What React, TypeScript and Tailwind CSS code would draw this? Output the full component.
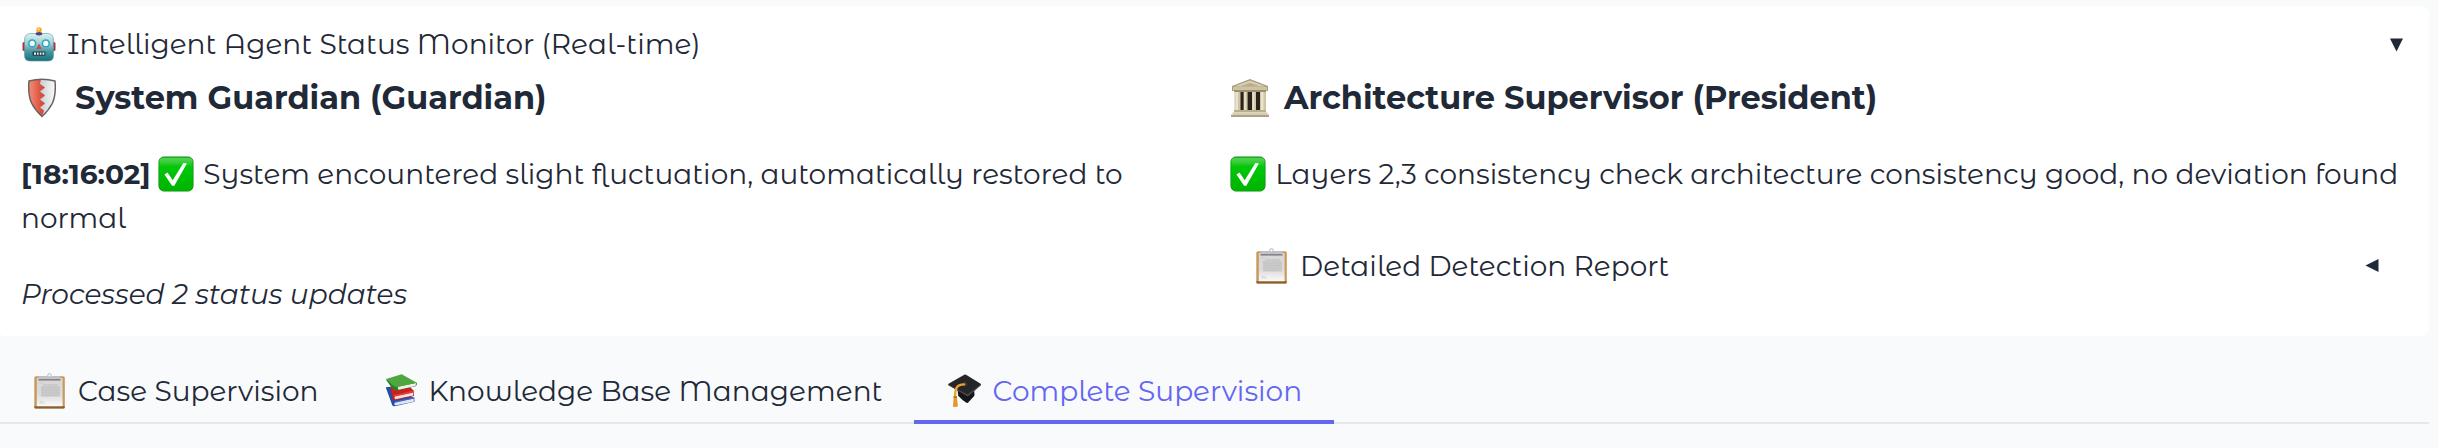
import { useState } from 'react'
import type { ReactNode } from 'react'
import clsx from 'clsx'

type IconProps = { className?: string }

function RobotIcon({ className }: IconProps) {
    return (
        <svg viewBox="0 0 36 36" className={className} aria-hidden="true">
            <defs>
                <linearGradient id="robot-face" x1="0" y1="0" x2="0" y2="1">
                    <stop offset="0" stopColor="#d9f4f1" />
                    <stop offset="0.35" stopColor="#a3d0d3" />
                    <stop offset="0.65" stopColor="#4a98a0" />
                    <stop offset="1" stopColor="#15707c" />
                </linearGradient>
            </defs>
            <rect x="1.5" y="16" width="4" height="9" rx="1.5" fill="#b3303c" />
            <rect x="30.5" y="16" width="4" height="9" rx="1.5" fill="#b3303c" />
            <circle cx="18" cy="4" r="2.7" fill="#f6a421" />
            <circle cx="17.5" cy="3.2" r="1.2" fill="#fdd66b" />
            <path d="M10 7.500h16q6.500 0 6.500 6.500v15.500q0 5.500-5.500 5.500H9q-5.500 0-5.500-5.500V14q0-6.500 6.500-6.500z" fill="url(#robot-face)" stroke="#5b98a0" strokeWidth="0.6" />
            <ellipse cx="18" cy="7.800" rx="3.400" ry="1.700" fill="#5a3f78" />
            <circle cx="11.2" cy="17.4" r="4.2" fill="#2fa5c6" />
            <circle cx="24.8" cy="17.4" r="4.2" fill="#2fa5c6" />
            <circle cx="11.2" cy="17.4" r="2.600" fill="#f5feff" />
            <circle cx="24.8" cy="17.4" r="2.600" fill="#f5feff" />
            <path d="M18 17.5l2.800 5.500h-5.600z" fill="#c94b4b" />
            <rect x="11.5" y="25.500" width="13" height="4.2" rx="1" fill="#1d4047" />
            <path d="M13 26.500h2v2.200h-2zM16 26.500h1.600v2.200H16zM18.800 26.500h1.600v2.200h-1.600zM21.500 26.500h1.800v2.200h-1.800z" fill="#e8eeee" />
        </svg>
    )
}

function ShieldIcon({ className }: IconProps) {
    return (
        <svg viewBox="0 0 40 40" className={className} aria-hidden="true">
            <defs>
                <linearGradient id="shield-red" x1="0" y1="0" x2="1" y2="0">
                    <stop offset="0" stopColor="#f0907c" />
                    <stop offset="0.5" stopColor="#e46552" />
                    <stop offset="1" stopColor="#c9402c" />
                </linearGradient>
                <linearGradient id="shield-silver" x1="0" y1="0" x2="1" y2="0">
                    <stop offset="0" stopColor="#b9bcc4" />
                    <stop offset="0.5" stopColor="#cfd2d9" />
                    <stop offset="1" stopColor="#fbfbfc" />
                </linearGradient>
            </defs>
            <path d="M8 3Q21-.5 34 3q1.200 13-2.500 22Q28 32 21 38.500 14 32 10.500 25 6.800 16 8 3z" fill="url(#shield-silver)" />
            <path d="M8 3q6.500-1.700 12-1.700L19 6l5 3.500-5 4 5 4-5 4 5 4-5 4 4 3-2 6Q14 32 10.500 25 6.800 16 8 3z" fill="url(#shield-red)" />
            <path d="M8 3Q21-.5 34 3q1.200 13-2.500 22Q28 32 21 38.500 14 32 10.500 25 6.800 16 8 3z" fill="none" stroke="#6b625f" strokeWidth="1.500" strokeLinejoin="round" />
        </svg>
    )
}

function TempleIcon({ className }: IconProps) {
    return (
        <svg viewBox="0 0 40 40" className={className} aria-hidden="true">
            <path d="M20 1L38 8v5H2V8z" fill="#a79c7f" />
            <path d="M20 2.500L36 8.600H4z" fill="#d9d1b2" />
            <path d="M20 4.800l9 3.200H11z" fill="#b8ae8e" />
            <rect x="3" y="9" width="34" height="3.500" fill="#cdc3a2" />
            <rect x="5" y="12" width="30" height="21" fill="#2b211d" />
            <path d="M4.500 12h6v21h-6zM13.600 12h4v21h-4zM22 12h4v21h-4zM30 12h6v21h-6z" fill="#cfc6a6" />
            <path d="M5.500 12H8v21H5.500zM14.200 12h1.600v21h-1.600zM22.600 12h1.600v21h-1.600zM31 12h2.500v21H31z" fill="#e9e3cc" />
            <path d="M4 12h32v2H4z" fill="#9b9070" />
            <rect x="4" y="32" width="32" height="2.400" fill="#b9af8d" />
            <rect x="2.500" y="34.400" width="35" height="2.300" fill="#d8cfb0" />
            <rect x="1" y="36.700" width="38" height="2.300" fill="#aea382" />
        </svg>
    )
}

function CheckIcon({ className }: IconProps) {
    return (
        <svg viewBox="0 0 36 36" className={className} aria-hidden="true">
            <defs>
                <linearGradient id="check-green" x1="0" y1="0" x2="0" y2="1">
                    <stop offset="0" stopColor="#17a717" />
                    <stop offset="0.05" stopColor="#4fd44f" />
                    <stop offset="0.18" stopColor="#2fcb2f" />
                    <stop offset="0.28" stopColor="#00c80a" />
                    <stop offset="1" stopColor="#00b300" />
                </linearGradient>
            </defs>
            <rect x="0.900" y="0.900" width="34.200" height="34.200" rx="5" fill="url(#check-green)" stroke="#159a1a" strokeWidth="0.900" />
            <path d="M6.500 18.600l3-2 5.200 7.600L25.400 7l3.500.4-12.600 22.400h-2.200z" fill="#fff" />
        </svg>
    )
}

function ClipboardIcon({ className }: IconProps) {
    return (
        <svg viewBox="0 0 36 36" className={className} aria-hidden="true">
            <defs>
                <linearGradient id="clip-paper" x1="0" y1="0" x2="0" y2="1">
                    <stop offset="0" stopColor="#d6d6d6" />
                    <stop offset="0.600" stopColor="#dcdcdc" />
                    <stop offset="1" stopColor="#fafafa" />
                </linearGradient>
            </defs>
            <rect x="2.300" y="3.200" width="30.500" height="32.300" rx="1.600" fill="#c8995a" />
            <path d="M2.300 33.200h30.500v.7q0 1.600-1.600 1.600H3.900q-1.600 0-1.600-1.600z" fill="#8a5e2e" />
            <rect x="4.800" y="5" width="25.800" height="28.200" fill="url(#clip-paper)" />
            <path d="M11 11h15v2h2v10.500H9V13h2z" fill="#cacaca" />
            <path d="M9.500 15h18M9.500 17.500h18M9.500 20h18M9.500 22.500h14" stroke="#bdbdbd" strokeWidth="0.500" />
            <path d="M7.500 10h3.500M7.500 28.500h3.500M7.500 30h5.500" stroke="#c6c6c6" strokeWidth="0.600" />
            <rect x="6.500" y="3.200" width="22" height="3" rx="0.800" fill="#bcc3cf" />
            <path d="M6.500 6.200h22v1.300h-22z" fill="#77706b" />
            <circle cx="17.500" cy="2.300" r="1.800" fill="#f2f5f9" stroke="#a9bad0" strokeWidth="0.900" />
        </svg>
    )
}

function BooksIcon({ className }: IconProps) {
    return (
        <svg viewBox="0 0 36 36" className={className} aria-hidden="true">
            <path d="M3.700 14.300l5-.6L32.300 25l.2 3.700-19.800 4.600q-2 .4-2.600-1.500z" fill="#2b4aa5" />
            <path d="M13.200 29l18.600-3.600v3.400L13 32.600q-1.600-1.600.2-3.600z" fill="#e3e6ef" />
            <path d="M12.200 28.400l19.900-4.200.3 1.400L13 29.800z" fill="#4167c6" />
            <path d="M8.500 13.500l18.500-.5 4.500 4.500.4 5.400-18.400 4.300q-2.300.3-2.900-1.400z" fill="#c9211e" />
            <path d="M13 23l18-3.600v3.100L13.300 26.300q-1.600-1.500-.3-3.300z" fill="#f1e3e1" />
            <path d="M11 22.300l20.500-4.800.3 2-18.500 3.900z" fill="#ea3b33" />
            <path d="M3.800 6.500l31 3.200.2 1.500-1.200 2.100-18.600 4.200q-3 .5-5-2.300z" fill="#2c7f28" />
            <path d="M16.300 13.500L34.200 10l-.7 3L16.600 16.800q-1.600-1.400-.3-3.300z" fill="#eef1e8" />
            <path d="M4 6.100L19.700 1.200l15.100 8.600-19 4.200q-3 .3-5-1.700z" fill="#4fa741" />
        </svg>
    )
}

function GraduationIcon({ className }: IconProps) {
    return (
        <svg viewBox="0 0 37 36" className={className} aria-hidden="true">
            <path d="M12 17l16.500-3 .8 7.500q.1 1.500-1.300 2.700l-5.200 5.600q-.8.700-1.800.2-4.500-2.500-8.500-7z" fill="#161618" />
            <path d="M18.800 1.400q.9-.6 1.800 0l15 9.100q.8.700.1 1.500L23.400 22.700q-.9.700-1.900.2L2.600 12q-.7-.7 0-1.400z" fill="#262628" />
            <path d="M2.400 11.200l19.800 10.300L36 10.900v.9L23.400 22.900q-.9.700-1.900.2L2.600 12z" fill="#4a4a4e" />
            <ellipse cx="19.300" cy="11" rx="2.500" ry="1.900" fill="#3c3c40" />
            <path d="M18.500 11.200q-5.500 0-7.500 3.300-2 3.500-1.600 9.500" fill="none" stroke="#eba433" strokeWidth="2.400" strokeLinecap="round" />
            <path d="M8 23.500h3l1.300 10.200q-2.500 1.600-5.200.2z" fill="#e39a2a" />
            <path d="M7.800 23.500H11.200v1.800H7.800z" fill="#b5701a" />
        </svg>
    )
}

function Triangle({ open }: { open: boolean }) {
    return (
        <svg viewBox="0 0 20 20" className={clsx('size-5 shrink-0', !open && 'rotate-90')} aria-hidden="true">
            <path d="M3 4.500h13L9.500 17.500z" fill="currentColor" />
        </svg>
    )
}

function AgentHeading({ icon, children }: { icon: ReactNode; children: ReactNode }) {
    return (
        <h2 className="flex items-center gap-3.5 font-['Montserrat','Inter',sans-serif] text-[32px] leading-12 font-bold">
            {icon}
            {children}
        </h2>
    )
}

const tabs = [
    { id: 'case', label: 'Case Supervision', icon: ClipboardIcon },
    { id: 'knowledge', label: 'Knowledge Base Management', icon: BooksIcon },
    { id: 'complete', label: 'Complete Supervision', icon: GraduationIcon },
]

export default function App() {
    const [monitorOpen, setMonitorOpen] = useState(true)
    const [reportOpen, setReportOpen] = useState(false)
    const [activeTab, setActiveTab] = useState('complete')

    return (
        <main className="min-h-screen bg-[#f9fafc] pt-1.5 pr-[9px] font-['Montserrat_Alternates','Inter',sans-serif] text-[28px] leading-11 text-[#1f2937]">
            {/* Agent status */}
            <section className="rounded-l-sm rounded-r-lg bg-white pt-4 pr-[22px] pb-5 pl-[21px]">
                <button
                    type="button"
                    aria-expanded={monitorOpen}
                    onClick={() => setMonitorOpen(!monitorOpen)}
                    className="flex w-full items-center justify-between text-left"
                >
                    <span className="flex items-center gap-2.5">
                        <RobotIcon className="size-9 shrink-0" />
                        Intelligent Agent Status Monitor (Real-time)
                    </span>
                    <Triangle open={monitorOpen} />
                </button>

                {monitorOpen && (
                    <div className="mt-2 grid grid-cols-2 gap-8">
                        <div>
                            <AgentHeading icon={<ShieldIcon className="size-10 shrink-0" />}>
                                System Guardian (Guardian)
                            </AgentHeading>
                            <p className="mt-7.5">
                                <strong className="font-['Montserrat','Inter',sans-serif] font-bold">[18:16:02]</strong>{' '}
                                <CheckIcon className="mr-0.5 inline-block size-9 align-[-8px]" />{' '}
                                System encountered slight fluctuation, automatically restored to normal
                            </p>
                            <p className="mt-8 font-['Montserrat','Inter',sans-serif] italic">Processed 2 status updates</p>
                        </div>

                        <div>
                            <AgentHeading icon={<TempleIcon className="size-10 shrink-0" />}>
                                Architecture Supervisor (President)
                            </AgentHeading>
                            <p className="mt-7.5">
                                <CheckIcon className="mr-0.5 inline-block size-9 align-[-8px]" />{' '}
                                Layers 2,3 consistency check architecture consistency good, no deviation found
                            </p>
                            <button
                                type="button"
                                aria-expanded={reportOpen}
                                onClick={() => setReportOpen(!reportOpen)}
                                className="mt-12 flex w-full items-center justify-between px-6 text-left"
                            >
                                <span className="flex items-center gap-2.5">
                                    <ClipboardIcon className="size-9 shrink-0" />
                                    Detailed Detection Report
                                </span>
                                <Triangle open={reportOpen} />
                            </button>
                        </div>
                    </div>
                )}
            </section>

            {/* Tabs */}
            <div role="tablist" className="mt-6 flex shadow-[inset_0_-2px_0_#e5e7eb]">
                {tabs.map((tab) => {
                    const isActive = tab.id === activeTab
                    return (
                        <button
                            key={tab.id}
                            type="button"
                            role="tab"
                            aria-selected={isActive}
                            onClick={() => setActiveTab(tab.id)}
                            className={clsx(
                                'flex items-center gap-2.5 border-b-4 px-8 pt-[9px] pb-[7px]',
                                isActive ? 'border-[#6366f1] text-[#6366f1]' : 'border-transparent'
                            )}
                        >
                            <tab.icon className="size-9 shrink-0" />
                            {tab.label}
                        </button>
                    )
                })}
            </div>
        </main>
    )
}
